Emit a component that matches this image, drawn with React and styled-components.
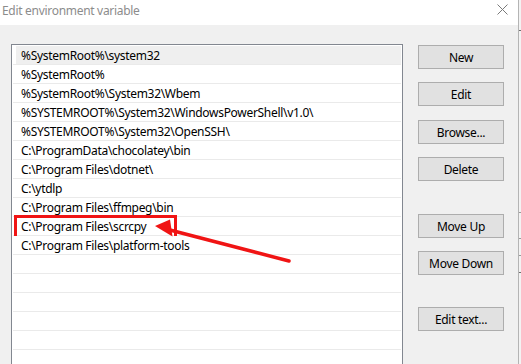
import styled, { createGlobalStyle } from "styled-components";

const Global = createGlobalStyle`
  html, body {
    margin: 0;
    padding: 0;
    background: #f0f0f0;
    overflow: hidden;
  }
  body {
    font-family: "Noto Sans", "Liberation Sans", sans-serif;
    font-size: 12px;
    letter-spacing: -0.3px;
    color: #000;
  }
`;

const Screen = styled.div`
  position: relative;
  display: flex;
  width: 521px;
  height: 364px;
  overflow: hidden;
`;

const Dialog = styled.div`
  width: 518px;
  display: flex;
  flex-direction: column;
  background: #f0f0f0;
`;

const BehindWindow = styled.div`
  flex: 1;
  border-left: 1px solid #b4b4b4;
  background: #f3f3f3;
  display: flex;
  flex-direction: column;
`;

const BehindLine = styled.div`
  flex-shrink: 0;
  margin-top: ${(p) => p.$top}px;
  height: 1px;
  background: ${(p) => p.$color || "#9a9a9a"};
`;

const TitleBar = styled.div`
  flex-shrink: 0;
  height: 25px;
  background: #fff;
  display: flex;
  align-items: center;
  justify-content: space-between;
  padding: 0 10px 0 2px;
`;

const Title = styled.span`
  color: #8c8c8c;
  font-size: 12px;
  line-height: 1;
  margin-top: -4px;
`;

const Close = styled.svg`
  width: 11px;
  height: 11px;
  margin-top: -6px;
`;

const Body = styled.div`
  flex: 1;
  min-height: 0;
  display: flex;
  align-items: flex-start;
  padding: 19px 0 0 11px;
`;

const List = styled.div`
  flex-shrink: 0;
  width: 388px;
  border: 1px solid #828790;
  border-bottom: none;
  background: #fff;
  padding: 1px 1px 0 1px;
`;

const Row = styled.div`
  position: relative;
  height: 18px;
  border-bottom: 1px solid #eaeaea;
  padding-left: 8px;
  display: flex;
  align-items: center;
  white-space: nowrap;
  background: ${(p) =>
    p.$selected ? "linear-gradient(to right, #fff 3px, #efefef 3px)" : "#fff"};

  ${(p) =>
    p.$marked &&
    `
    &::after {
      content: "";
      position: absolute;
      left: 1px;
      top: -2px;
      width: 163px;
      height: 25px;
      box-sizing: border-box;
      border: 3px solid #f01414;
    }
  `}
`;

const Buttons = styled.div`
  display: flex;
  flex-direction: column;
  margin-left: 15px;
  padding-top: 1px;
`;

const Button = styled.div`
  width: 84px;
  height: 22px;
  margin-top: ${(p) => p.$space || 0}px;
  border: 1px solid #adadad;
  background: #e1e1e1;
  display: flex;
  align-items: center;
  justify-content: center;
  font-size: 12px;
`;

const Annotation = styled.svg`
  position: absolute;
  left: 0;
  top: 0;
  width: 521px;
  height: 364px;
  pointer-events: none;
`;

const paths = [
  "%SystemRoot%\\system32",
  "%SystemRoot%",
  "%SystemRoot%\\System32\\Wbem",
  "%SYSTEMROOT%\\System32\\WindowsPowerShell\\v1.0\\",
  "%SYSTEMROOT%\\System32\\OpenSSH\\",
  "C:\\ProgramData\\chocolatey\\bin",
  "C:\\Program Files\\dotnet\\",
  "C:\\ytdlp",
  "C:\\Program Files\\ffmpeg\\bin",
  "C:\\Program Files\\scrcpy",
  "C:\\Program Files\\platform-tools",
];

const rows = [...paths, ...Array(6).fill("")];

const buttons = [
  { label: "New", space: 0 },
  { label: "Edit", space: 13 },
  { label: "Browse...", space: 14 },
  { label: "Delete", space: 13 },
  { label: "Move Up", space: 33 },
  { label: "Move Down", space: 13 },
  { label: "Edit text...", space: 32 },
];

export default function App() {
  return (
    <>
      <Global />
      <Screen>
        <Dialog>
          <TitleBar>
            <Title>Edit environment variable</Title>
            <Close viewBox="0 0 11 11">
              <path d="M0.5 0.5 L10.5 10.5 M10.5 0.5 L0.5 10.5" stroke="#7a7a7a" strokeWidth="1" />
            </Close>
          </TitleBar>
          <Body>
            <List>
              {rows.map((text, i) => (
                <Row key={i} $selected={i === 0} $marked={i === 9}>
                  {text}
                </Row>
              ))}
            </List>
            <Buttons>
              {buttons.map((b) => (
                <Button key={b.label} $space={b.space}>
                  {b.label}
                </Button>
              ))}
            </Buttons>
          </Body>
        </Dialog>
        <BehindWindow>
          <BehindLine $top={30} $color="#6e6e6e" />
          <BehindLine $top={181} />
          <BehindLine $top={25} />
          <BehindLine $top={16} />
          <BehindLine $top={16} $color="#6e6e6e" />
        </BehindWindow>
        <Annotation viewBox="0 0 521 364">
          <line x1="289" y1="261" x2="168" y2="229.5" stroke="#f01414" strokeWidth="3.5" strokeLinecap="round" />
          <polygon points="155,226 170,219.5 172.5,236.5" fill="#f01414" />
        </Annotation>
      </Screen>
    </>
  );
}
